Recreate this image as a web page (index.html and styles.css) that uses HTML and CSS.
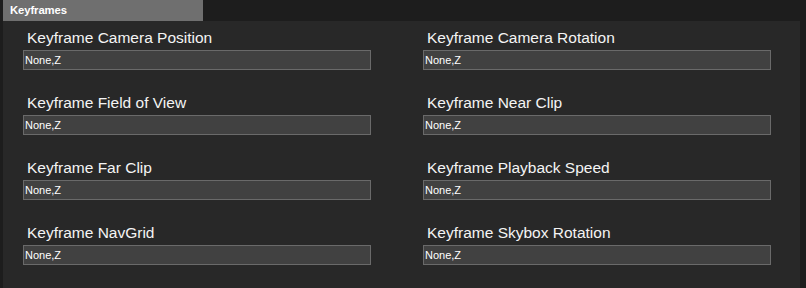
FILE: index.html
```html
<!DOCTYPE html>
<html>
<head>
<meta charset="utf-8">
<link rel="stylesheet" href="styles.css">
</head>
<body>
<div class="wrap">
  <div class="tab">Keyframes</div>
  <div class="panel">
    <div class="field"><div class="label">Keyframe Camera Position</div><div class="input">None,Z</div></div>
    <div class="field"><div class="label">Keyframe Camera Rotation</div><div class="input">None,Z</div></div>
    <div class="field"><div class="label">Keyframe Field of View</div><div class="input">None,Z</div></div>
    <div class="field"><div class="label">Keyframe Near Clip</div><div class="input">None,Z</div></div>
    <div class="field"><div class="label">Keyframe Far Clip</div><div class="input">None,Z</div></div>
    <div class="field"><div class="label">Keyframe Playback Speed</div><div class="input">None,Z</div></div>
    <div class="field"><div class="label">Keyframe NavGrid</div><div class="input">None,Z</div></div>
    <div class="field"><div class="label">Keyframe Skybox Rotation</div><div class="input">None,Z</div></div>
  </div>
</div>
</body>
</html>
```
FILE: styles.css
```css
html, body {
  margin: 0;
  padding: 0;
  background: #1d1d1d;
  height: 100%;
  overflow: hidden;
}
.wrap {
  padding-left: 3px;
  width: 797px;
  font-family: "Liberation Sans", Arial, sans-serif;
  color: #ffffff;
}
.tab {
  width: 200px;
  height: 21px;
  box-sizing: border-box;
  background: #6f6f6f;
  font-weight: bold;
  font-size: 11.3px;
  line-height: 21px;
  padding-left: 7px;
  letter-spacing: -0.1px;
}
.panel {
  background: #282828;
  height: 267px;
  display: grid;
  grid-template-columns: 400px 397px;
  row-gap: 24px;
  padding-top: 8px;
  box-sizing: border-box;
  align-content: start;
}
.field {
  padding-left: 20px;
}
.label {
  font-size: 15.5px;
  line-height: 18px;
  padding-left: 4px;
  margin-bottom: 3px;
  color: #f4f4f4;
}
.input {
  width: 348px;
  height: 20px;
  box-sizing: border-box;
  border: 1px solid #6a6a6a;
  background: #414141;
  font-size: 11px;
  line-height: 18px;
  padding-left: 1px;
  color: #ffffff;
}
```
